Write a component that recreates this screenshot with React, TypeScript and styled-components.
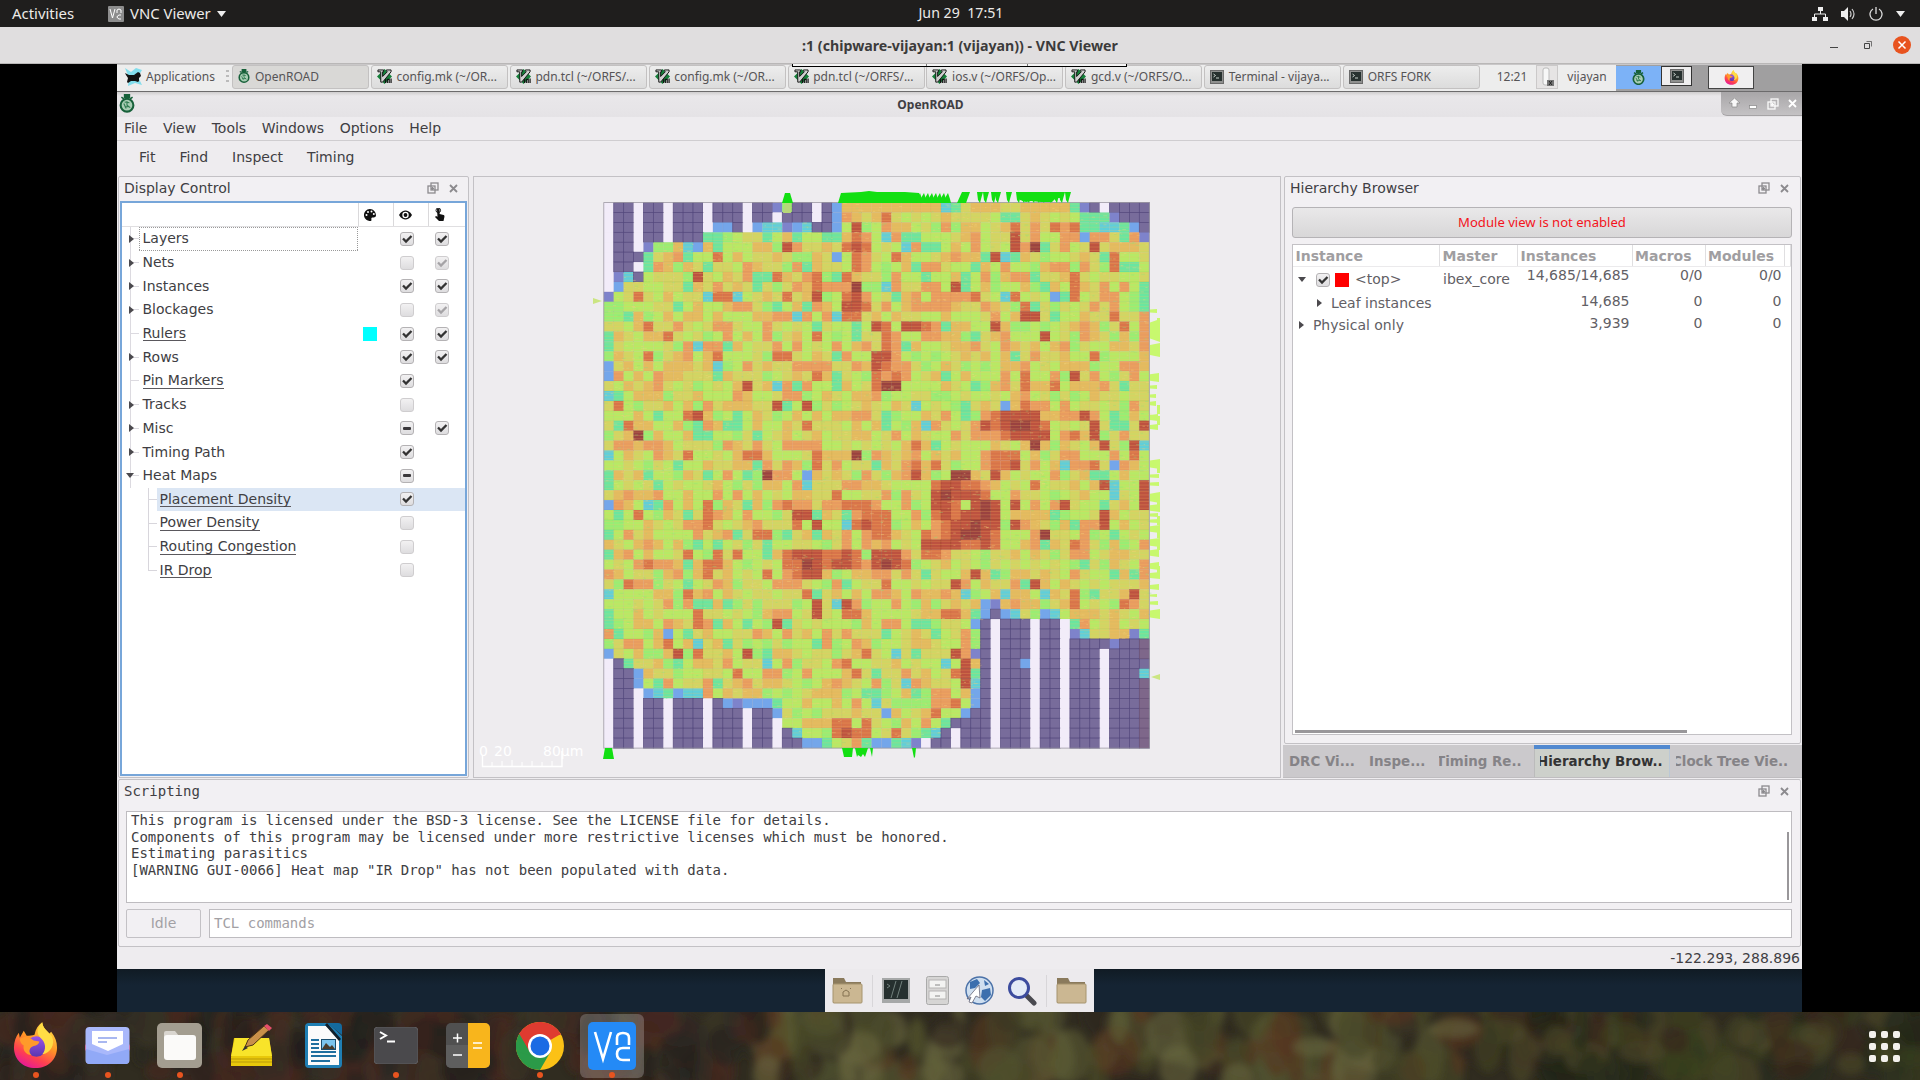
import React from "react";
import styled, { createGlobalStyle, css } from "styled-components";

const SANS = `"DejaVu Sans", "Noto Sans", sans-serif`;
const PANEL = `"Noto Sans", "DejaVu Sans", sans-serif`;
const MONO = `"DejaVu Sans Mono", "Liberation Mono", monospace`;

const Global = createGlobalStyle`
  * { box-sizing: border-box; }
  body { margin: 0; background: #000; overflow: hidden; }
`;

/* ---------- host desktop ---------- */

const Screen = styled.div`
  width: 1920px;
  height: 1080px;
  display: flex;
  flex-direction: column;
  font-family: ${SANS};
  font-size: 14px;
  color: #403e43;
  overflow: hidden;
  white-space: nowrap;
`;

const TopBar = styled.header`
  height: 27px;
  flex: none;
  background: #1f1e1d;
  color: #eceae8;
  display: grid;
  grid-template-columns: 1fr 1fr 1fr;
  align-items: center;
  padding: 0 8px 0 12px;
  font-family: ${PANEL};
  font-size: 14.2px;
`;
const TopLeft = styled.div`
  display: flex;
  align-items: center;
  font-size: 14.9px;
  line-height: 25px;
`;
const AppMenu = styled.div`
  display: flex;
  align-items: center;
  gap: 6px;
  margin-left: 34px;
`;
const TopCenter = styled.div`
  text-align: center;
  white-space: pre;
  line-height: 24px;
  margin-top: -1px;
  padding-right: 2px;
`;
const TopRight = styled.div`
  display: flex;
  justify-content: flex-end;
  align-items: center;
  gap: 13px;
  padding-right: 7px;
`;

const WindowBar = styled.div`
  height: 37px;
  flex: none;
  background: #e0dedf;
  border-bottom: 1px solid #b9b7b7;
  display: grid;
  grid-template-columns: 1fr auto 1fr;
  align-items: center;
  font: bold 14.2px ${PANEL};
  color: #3c3b3b;
  padding: 0 9px 0 0;
`;
const WindowTitle = styled.div`
  grid-column: 2;
  padding-left: 9px;
`;
const WindowButtons = styled.div`
  display: flex;
  justify-content: flex-end;
  align-items: center;
  gap: 26px;
  svg:last-child { margin-left: -5px; }
`;

const Viewer = styled.main`
  height: 948px;
  flex: none;
  background: #000;
  padding: 0 118px 0 117px;
  position: relative;
`;
const ToolbarHandle = styled.div`
  position: absolute;
  left: 792px;
  top: 0;
  width: 335px;
  height: 3px;
  background: linear-gradient(90deg, transparent 133px, #777 133px 134px, transparent 134px 234px, #777 234px 235px, transparent 235px), #f4f4f4;
  border: solid #000;
  border-width: 0 1px 1px;
`;
const Remote = styled.div`
  width: 1685px;
  height: 948px;
  background: linear-gradient(#101b24, #152433 16px) bottom / 100% 43px no-repeat;
  display: flex;
  flex-direction: column;
`;

/* ---------- remote task bar ---------- */

const TaskBar = styled.div`
  height: 27px;
  flex: none;
  background: #ededed;
  border-top: 1px solid #c9c7c8;
  display: flex;
  align-items: stretch;
  font-family: ${PANEL};
  font-size: 12px;
  line-height: 22px;
  color: #565456;
`;
const Applications = styled.div`
  width: 115px;
  display: flex;
  align-items: center;
  padding: 0 0 2px 7px;
  gap: 3px;
`;
const Grip = styled.i`
  width: 3px;
  height: 14px;
  margin-left: auto;
  margin-right: 3px;
  background: repeating-linear-gradient(#bbb 0 2px, transparent 2px 5px);
`;
const Task = styled.div<{ $active?: boolean }>`
  width: 137px;
  flex: none;
  margin: 0 1.9px 2px 0;
  padding: 0 5px 1px;
  display: flex;
  align-items: center;
  gap: ${(p) => (p.$active ? 5 : 4.6)}px;
  border: 1px solid #c3c1c1;
  border-radius: 3px;
  background: ${(p) => (p.$active ? "#d9d8d6" : "linear-gradient(#ededed,#dcdcdc)")};
`;
const Clock = styled.div`
  width: 54px;
  display: flex;
  align-items: center;
  justify-content: center;
  padding: 0 0 2px 6px;
`;
const Meter = styled.div`
  width: 22px;
  border: 1px solid #cbc9c9;
  background: #e6e4e4;
  margin-bottom: 2px;
  display: grid;
  place-items: center;
`;
const User = styled.div`
  width: 58px;
  padding-bottom: 2px;
  display: grid;
  place-items: center;
`;
const Pager = styled.div`
  flex: 1;
  background: #a09fa0;
  display: flex;
  align-items: flex-start;
`;
const Desk = styled.div<{ $w: number; $h: number; $bg: string; $line?: string; $m?: number }>`
  width: ${(p) => p.$w}px;
  height: ${(p) => p.$h}px;
  margin-right: ${(p) => p.$m ?? 0}px;
  margin-top: 1px;
  background: ${(p) => p.$bg};
  border: 1px solid ${(p) => p.$line ?? p.$bg};
  display: grid;
  place-items: center;
`;

/* ---------- OpenROAD window ---------- */

const AppWindow = styled.section`
  height: 878px;
  flex: none;
  display: flex;
  flex-direction: column;
  background: #eeecef;
  border-top: 1px solid #6c6b6c;
`;
const AppTitle = styled.div`
  height: 25px;
  flex: none;
  display: grid;
  grid-template-columns: 1fr auto 1fr;
  background: linear-gradient(#cfcdce, #e9e7ea 4px, #e5e3e6);
  font: bold 12px ${PANEL};
  line-height: 26px;
  padding-left: 2px;
  & > svg { margin-top: 2px; }
`;
const AppName = styled.span`
  padding-right: 60px;
`;
const AppButtons = styled.div`
  justify-self: end;
  width: 81px;
  height: 24px;
  border-radius: 0 0 0 6px;
  background: linear-gradient(#a8a6a8, #c4c2c4);
  border-bottom: 1px solid #a5a3a5;
  display: flex;
  align-items: center;
  justify-content: space-between;
  padding: 0 5px 0 8px;
`;
const MenuBar = styled.nav`
  height: 24px;
  flex: none;
  display: flex;
  gap: 15.5px;
  padding: 1px 0 0 7px;
  line-height: 20px;
  border-bottom: 1px solid #cfcdd0;
`;
const ToolBar = styled(MenuBar)`
  height: 35px;
  gap: 24px;
  padding: 6px 0 0 22px;
  border: 0;
`;
const Work = styled.div`
  height: 601px;
  flex: none;
  display: grid;
  grid-template-columns: 352px 810px 1fr;
  column-gap: 2px;
`;
const Dock = styled.section`
  border: 1px solid #c3c1c5;
  border-radius: 2px;
  background: #f2f0f3;
  display: flex;
  flex-direction: column;
  margin-left: 1px;
`;
const DockHead = styled.div<{ $right?: number }>`
  height: 24px;
  flex: none;
  display: flex;
  align-items: center;
  padding: 0 ${(p) => p.$right ?? 11}px 2px 5px;
  gap: 10px;
  svg:first-of-type { margin-left: auto; }
`;

const Tree = styled.div`
  flex: 1;
  margin: 0 1px 1px 1px;
  border: 2px solid #77a6d9;
  background: #fff;
`;
const TreeHead = styled.div`
  height: 24px;
  display: grid;
  grid-template-columns: 237px 35px 35px 1fr;
  border-bottom: 1px solid #e0dfe1;
`;
const HeadCell = styled.div`
  border-right: 1px solid #dad9db;
  padding: 0 0 0 5px;
  display: flex;
  align-items: center;
  &:last-child { border: 0; }
`;
const TreeRow = styled.div<{ $sel?: boolean }>`
  height: 23.7px;
  display: grid;
  grid-template-columns: 236px 38px 35px 1fr;
  align-items: center;
  ${(p) => p.$sel && css`background: linear-gradient(90deg, #fff 35px, #dbe6f4 35px);`}
`;
const NameCell = styled.div<{ $child?: boolean; $focus?: boolean }>`
  height: 100%;
  display: flex;
  align-items: center;
  padding-left: ${(p) => (p.$child ? 25.5 : 3.5)}px;
  ${(p) => p.$focus && css`background:
    repeating-linear-gradient(90deg,#999 0 1px,transparent 1px 2px) 17px 0 / 221px 1px no-repeat,
    repeating-linear-gradient(90deg,#999 0 1px,transparent 1px 2px) 17px 100% / 221px 1px no-repeat,
    repeating-linear-gradient(#999 0 1px,transparent 1px 2px) 17px 0 / 1px 100% no-repeat,
    repeating-linear-gradient(#999 0 1px,transparent 1px 2px) 235px 0 / 1px 100% no-repeat;`}
`;
const Label = styled.span<{ $u?: boolean }>`
  line-height: 17px;
  ${(p) => p.$u && css`border-bottom: 1px solid #5a585d; line-height: 14.5px;`}
`;
const Branch = styled.i<{ $end?: boolean }>`
  width: 9px;
  height: 100%;
  margin-right: 3px;
  background:
    linear-gradient(#d8d6dc, #d8d6dc) 0 0 / 1px ${(p) => (p.$end ? "50%" : "100%")} no-repeat,
    linear-gradient(#d8d6dc, #d8d6dc) 0 50% / 100% 1px no-repeat;
`;
const ArrowBox = styled.i`
  width: 17px;
  height: 100%;
  display: flex;
  align-items: center;
  background: linear-gradient(#dcdae0, #dcdae0) 4px 50% / 9px 1px no-repeat, linear-gradient(#dcdae0, #dcdae0) 4px 0 / 1px 100% no-repeat;
`;
const Arrow = styled.b<{ $open?: boolean }>`
  border: solid transparent;
  ${(p) => p.$open
    ? css`border-width: 5px 4.5px 0; border-top-color: #4b494d;`
    : css`border-width: 4.5px 0 4.5px 5px; border-left-color: #4b494d; margin-left: 3px;`}
`;
const Swatch = styled.i<{ $c: string }>`
  width: 14px;
  height: 14px;
  background: ${(p) => p.$c};
  margin-left: 5px;
`;
const Box = styled.i<{ $dim?: boolean; $left?: number }>`
  width: 14px;
  height: 14px;
  flex: none;
  border: 1px solid ${(p) => (p.$dim ? "#cfcdcf" : "#b4b2b4")};
  border-radius: 3px;
  background: linear-gradient(#f2f1f2, #dedddf);
  display: grid;
  place-items: center;
  margin-left: ${(p) => p.$left ?? 4}px;
`;

const Canvas = styled.div`
  border: 1px solid #c3c1c5;
  margin-left: 2px;
  background: #eeecef;
  overflow: hidden;
  svg { display: block; }
`;

const RightCol = styled.div`
  display: flex;
  flex-direction: column;
`;
const HierDock = styled(Dock)`
  height: 568px;
  flex: none;
  margin-right: 1px;
`;
const Banner = styled.div`
  height: 31px;
  margin: 6px 8px 0 7px;
  border: 1px solid #b5b3b6;
  border-radius: 3px;
  background: linear-gradient(#e9e8e9, #d8d7d8);
  color: #f3141c;
  font: 13.1px/29px ${PANEL};
  text-align: center;
`;
const Table = styled.div`
  flex: 1;
  margin: 6px 8px 8px 7px;
  border: 1px solid #c3c1c5;
  background: #fff;
  display: flex;
  flex-direction: column;
  color: #626065;
`;
const cols = `147px 78px 114.5px 73px 79px 1fr`;
const THead = styled.div`
  height: 22px;
  display: grid;
  grid-template-columns: ${cols};
  font-weight: bold;
  color: #a09ea1;
  border-bottom: 1px solid #ebeaec;
  overflow: hidden;
`;
const Th = styled.div`
  padding-left: 2.5px;
  line-height: 22px;
  border-right: 1px solid #e0dfe1;
  overflow: hidden;
`;
const TRow = styled.div<{ $h: number; $up: number }>`
  height: ${(p) => p.$h}px;
  display: grid;
  grid-template-columns: ${cols};
  line-height: ${(p) => p.$h}px;
  & > span { text-align: right; padding-right: 3px; margin-top: -${(p) => p.$up}px; }
  & > em { font-style: normal; padding-left: 3px; }
`;
const TName = styled.div<{ $pad: number }>`
  display: flex;
  align-items: center;
  padding-left: ${(p) => p.$pad}px;
`;
const TopName = styled.span`
  padding-left: 6px;
`;
const HScroll = styled.i`
  width: 392px;
  height: 3px;
  margin: auto 0 1px 2px;
  background: #99979a;
`;
const Tabs = styled.div`
  height: 33px;
  flex: none;
  margin-top: 1px;
  display: flex;
  background: #cbc9cc;
  font-weight: bold;
  font-size: 13.4px;
  color: #858387;
`;
const Tab = styled.div<{ $w: number; $on?: boolean; $cut?: number }>`
  width: ${(p) => p.$w}px;
  padding: 0 6px;
  line-height: 34px;
  border-bottom: 1px solid #bfbdc0;
  ${(p) => p.$on && css`background: #cdd0cb; color: #333; box-shadow: inset 0 4px #5289d0, inset 1px 0 #bbb, inset -1px 0 #bbc8d6;`}
  & > div { overflow: hidden; height: 32px; }
  & > div > span { margin-left: -${(p) => p.$cut ?? 0}px; }
`;

const Script = styled(Dock)`
  height: 168px;
  flex: none;
  margin: 2px 1px 0 1px;
  font-family: ${MONO};
`;
const Output = styled.div`
  height: 92px;
  margin: 7px 8px 0 7px;
  padding: 0 2px 0 4px;
  background: #fff;
  border: 1px solid #bebcc0;
  line-height: 16.65px;
  display: flex;
  justify-content: space-between;
`;
const VScroll = styled.i`
  width: 2px;
  height: 68px;
  align-self: flex-end;
  margin: 0 0 2px;
  background: #99979a;
`;
const CommandLine = styled.div`
  display: flex;
  gap: 8px;
  height: 29px;
  margin: 6px 8px 0 7px;
  color: #a2a0a4;
`;
const Idle = styled.div`
  width: 75px;
  border: 1px solid #c3c1c5;
  border-radius: 2px;
  text-align: center;
  line-height: 27px;
  font-family: ${SANS};
`;
const Command = styled.div`
  flex: 1;
  border: 1px solid #bebcc0;
  background: #fff;
  padding-left: 4px;
  line-height: 26px;
`;
const Status = styled.div`
  flex: 1;
  text-align: right;
  padding: 3px 2px 0 0;
  line-height: 17px;
`;

const Shelf = styled.div`
  width: 269px;
  height: 43px;
  margin-left: 708px;
  background: #eceaed;
  display: flex;
  align-items: center;
  padding: 0 0 0 7px;
`;
const ShelfItem = styled.div<{ $w: number; $line?: boolean }>`
  width: ${(p) => p.$w}px;
  height: 32px;
  display: flex;
  align-items: center;
  ${(p) => p.$line && css`border-right: 1px solid #d8d6d9;`}
`;

/* ---------- host launcher ---------- */

const Launcher = styled.footer`
  height: 68px;
  flex: none;
  position: relative;
  display: flex;
  background: #302c20;
`;
const Wallpaper = styled.svg`
  position: absolute;
  inset: 0;
`;
const Launch = styled.div<{ $on?: boolean }>`
  position: relative;
  width: 64px;
  height: 64px;
  margin: 2px 4px;
  border-radius: 6px;
  display: grid;
  place-items: center;
  padding: 0 1px 1px 0;
  background: ${(p) => (p.$on ? "rgba(255,255,255,.22)" : "none")};
`;
const Dot = styled.i`
  position: absolute;
  bottom: 0;
  left: 29px;
  width: 6px;
  height: 6px;
  border-radius: 50%;
  background: #e9541f;
`;
const AppsGrid = styled.div`
  position: relative;
  margin: 19px 20px 0 auto;
  width: 31px;
  height: 31px;
  display: grid;
  grid-template-columns: repeat(3, 7px);
  grid-auto-rows: 7px;
  gap: 5px;
  i { background: #f3f1ec; border-radius: 2px; }
`;

/* ---------- heat map data ---------- */

const MAP = [
  " pp pp ppp ppp ppqgpp pboooo" + "ooooooctYoooYYooooot" + "qp pppp",
  " pp pp ppp ppp pp ppp pbOoYo" + "rYyYyYoYYYYyttYoYyYytttqppp",
  " pp pp ppp bbp bccqbcppb.R.." + ".............r.O.rOrttcctbp",
  " pp pp ppptt....t..t..tt.rO." + "cOtt.....O...R......b...t.q",
  " pp qggocb.t......R.....rRr." + "..cOtt...O...RODt.O..R.ooo.",
  " pppt..Ot..r...........b.rO." + ".r.....O..tRct........tr...",
  " pp t.....t...O....Ot....rO." + "...t.O...t..O.....O....rtt.",
  " qcp.....R.....ttr...r.tr..." + ".O..t...t.O..OOt...r.......",
  " b......t......t.....rO.OD.." + "c....O.Rt.......t..r......t",
  "q..r......crrc....r..R..rRO." + ".t.O.O..Or..cr...btr..OO..t",
  "gg.....t......O..t..t...RRr." + "O..OOOO...O...rt..........t",
  "ggt..............OOcO..crr.." + "..............RR.t.....r..O",
  "....r..O....O........t...t.R" + "r.RRr.t....R........O...r.O",
  "t.....r.........O....r...t.." + "rO...O...t......R.........O",
  "t........c..t....O.O......O." + "rOt......O..O.....O.......O",
  "....r......r.....rr....t...R" + "RO...........t.O.....r.....",
  "b..........c.......OO....O.R" + "rOO...........O.........OO.",
  "bO...O.....t.........r.t...r" + "OrO...t.....O.r..O.R.O.....",
  ".....O........R..cOtO..t...r" + "DD.......t..O.r..r......t..",
  "ct.........................O" + "..............O............",
  ".r........O......Rt.R......." + "...c....t...b.rOO........O.",
  ".....t..rR...t...........OO." + "t.....O.t.OrRRRRo.OORO.t...",
  ".tr......tO.tt......r......." + "t...c....ORrRDDRr....R.tt.R",
  "...D.....tt....t............" + ".O.......OOOrRRRR..r.R.....",
  ".OO.OO......O.....OO.O......" + "...r.t.........D......R..Rc",
  "c.......r.....rr.....r...D.O" + "...O.......rrr....OO.....r.",
  ".......t.......t.....r.O...t" + "..Or.r....OrrR....c.Or.b...",
  "t...t.....t...t.DO..b......." + "..OR...DDo.R.........tt....",
  "t....t.............Oc...OO.." + ".....rRRrrO....r......Rc..R",
  "..O..O.....O...........r...." + ".....RDRRRr..O.........c..R",
  "b...ct....r...t..OrOO.OOrrrO" + "..O..RRryRDR.R...OR...t...R",
  ".t.r....t.rO..O....RRt..tOrr" + "r..O.rRrRRDR.....t....R....",
  "........OOr....O...ryR..crRr" + "r....OrRRDRR.RO....tOOR....",
  "t.O.........Ot.rr.t..t..O.Or" + "r...rOrRDDRr...OD......t...",
  "....O....t.t....t.......O.O." + "O...RRRRrrRr....t..rO.....O",
  "t.......r..r.r..t.rRRRrrRr.R" + "RRO.rrO............OO......",
  "....rO..t.rr......rrDRrRRrOR" + "DRr.................t......",
  ".......O..r.....r..rRR......" + "O.O.t....R.t...........t.t.",
  "..rOO...t........OO....Ot..." + "r......R......tR...........",
  "c.......r.O.........rt.....O" + "........c...c...c..r.t...R.",
  "......O.Ott.t........R.cRO.." + ".O........bq.O.....r....r..",
  "t........r.......OO..R..rr.." + "......rr.tbpbc.gbc.........",
  "t........r.t..t..Rt........." + "O..tt....bp ppp pp t.......",
  ".t....b.t...............O..." + "t....t...gp ppp pp qc....qt",
  "......r..c..t........t......" + "........Ogp ppp pp ppppqppp",
  "b......R.r....R.t.........r." + ".c.t...ROqp ppp pp ppp pppp",
  " pt....t....O...c.O....Or..." + "......c.R.p ppb pp ppp pppp",
  " ppb.........r..OO.......r.t" + ".......rRtp ppp pp ppp pppc",
  " ppb.tO....t..O............." + "..c.....Rcp ppp pp ppp pppp",
  " pp bctbccO...............tt" + "...t.OO..bp ppp pp ppp pppp",
  " pp pp ppp pbqbbbt.........c" + ".....O.r.bp ppp pp ppp pppp",
  " pp pp ppp ppp ppb.........." + "b....r..bpp ppp pp ppp pppp",
  " pp pp ppp ppp pp .....rr.r." + "......tpppp ppp pp ppp pppp",
  " pp pp ppp ppp pp pc...rRrr." + ".r..tcp ppp ppp pp ppp pppp",
  " pp pp ppp ppp pp ppbbt...tb" + "btcq pp ppp ppp pp ppp pppp",
];

const SHADES: Record<string, string> = {
  " ": "#f2ecf9", p: "#786c9b", q: "#7e83cb", b: "#74a6ea", c: "#5fcfda",
  t: "#6ae6a0", g: "#98ee74", y: "#b6ea66", Y: "#d0d664", o: "#e2bb60",
  O: "#e89c60", r: "#d8744a", R: "#bd5240", D: "#9a4240",
};

function random(seed: number) {
  let s = seed;
  return () => {
    s = (s * 1664525 + 1013904223) >>> 0;
    return s / 4294967296;
  };
}

const CELL = 9.917;
const LEFT = 603.8;
const TOP = 202.6;

function HeatMap() {
  const rnd = random(77);
  const mix = "ggyyyyyyYYYYYooooO";
  const rects: React.ReactNode[] = [];
  MAP.forEach((row, j) =>
    [...row].forEach((ch, i) => {
      const pick = mix[Math.floor(rnd() * mix.length)];
      const key = ch === "." ? pick : ch;
      rects.push(
        <rect key={`${i}-${j}`} x={LEFT + i * CELL} y={TOP + j * CELL} width={CELL + 0.1} height={CELL + 0.1}
          fill={SHADES[key]} stroke={key === "p" ? "#54487d" : "#7a3a20"}
          strokeOpacity={key === "p" ? 0.85 : key === " " ? 0 : "RD".includes(key) ? 0.3 : 0.05} strokeWidth={key === "p" ? 0.8 : 0.7} />
      );
    })
  );
  const specks: React.ReactNode[] = [];
  for (let k = 0; k < 4200; k++) {
    const x = rnd() * 545, y = rnd() * 545;
    const ch = MAP[Math.min(54, Math.floor(y / CELL))][Math.min(54, Math.floor(x / CELL))];
    if (" pqb".includes(ch)) continue;
    specks.push(<rect key={k} x={LEFT + x} y={TOP + y} width={1 + rnd() * 3} height={1} fill={k % 3 ? "#f4d67e" : "#8fe07c"} opacity={0.35} />);
  }
  const lines: React.ReactNode[] = [];
  MAP.forEach((row, j) => {
    let start = -1;
    for (let i = 0; i <= 55; i++) {
      const live = i < 55 && !" pqb".includes(row[i]);
      if (live && start < 0) start = i;
      if (!live && start >= 0) {
        for (let n = 0; n < 3; n++)
          lines.push(<rect key={`${j}-${i}-${n}`} x={LEFT + start * CELL} y={TOP + j * CELL + n * 3.3 + 1} width={(i - start) * CELL} height={0.9} fill="#ffc060" opacity={0.24} />);
        start = -1;
      }
    }
  });
  const topPins = [980, 986, 994, 998, 1009, 1019, 1024, 1029, 1034, 1039, 1044, 1051, 1057, 1062, 1068];
  const spikes = [919, 923, 927, 931, 935, 939, 943, 947];
  const side: [number, number, number][] = [
    [309, 313, 7], [319, 342, 10], [343, 357, 10], [373, 382, 9], [385, 389, 7], [394, 398, 6], [401, 406, 6], [414, 421, 8], [424, 430, 8],
    [459, 469, 10], [474, 478, 9], [482, 486, 9], [492, 503, 10], [504, 512, 10], [513, 517, 8], [519, 523, 9], [525, 533, 10], [538, 547, 10], [549, 557, 9],
    [562, 570, 9], [572, 579, 10], [584, 590, 9], [594, 597, 7], [601, 605, 8], [609, 619, 10],
  ];
  return (
    <svg width="808" height="601" viewBox="474 177 808 601">
      <g shapeRendering="auto">{rects}</g>
      <g>{lines}</g>
      <g>{specks}</g>
      <rect x="603.8" y="202.6" width="545.5" height="545.5" fill="none" stroke="#9d9aa3" strokeWidth="0.8" />
      <path d="M1139 639h10v20h-10zM1139 679h10v69h-10z" fill="#8a5f6a" opacity=".35" />
      <g fill="#12df12">
        <path d="M785 193h5l3 10h-11z" />
        <path d="M841 193l20-1 8-1 8 1h28l14 1v10h-81z" />
        {spikes.map((x) => <path key={x} d={`M${x - 3} 203l1-5 3-5 2 6 1 4z`} />)}
        <path d="M962 192h8l-4 11h-9z" />
        {topPins.map((x) => <path key={x} d={`M${x - 3} 192h6l-2 7-1 4-2-3z`} />)}
        <path d="M1018 192h45l-3 6h-4l-4 4h-11l-10-1-5 1-6-2z" />
        <path d="M605 748h7l2 11h-11z" />
        <path d="M842 748h11l-1 9h-8zM855 748h13l-3 9-2-3-2 3-3-2-1 2zM870 748h3l-1 9z" />
        <path d="M912 748h4l-1 9-1 1z" />
      </g>
      <path d="M785 203h5l1 10h-8z" fill="#b7d77a" />
      <g fill="#c8f86e">
        {side.map(([a, b, w]) => <path key={a} d={`M1150 ${(a + b) / 2 - (b - a) * 0.35}L${1150 + w} ${a}V${b}L1150 ${(a + b) / 2 + (b - a) * 0.35}z`} />)}
        {[318, 328, 345, 405, 416, 464, 502, 516, 529, 541, 566].map((y) => <rect key={y} x="1157" y={y} width="3" height="9" />)}
      </g>
      <path d="M593 298l9 3-9 3zM1160 674l-9 3 9 3z" fill="#cbe582" />
      <g fill="none" stroke="#fff" strokeWidth="1.4">
        <path d="M482.5 755v11.5h79.5V751" />
        <path d="M492 766v-4M502 766v-5M512 766v-6M522 766v-4M532 766v-5M542 766v-4M552 766v-5" strokeWidth="1" />
      </g>
      <g fill="#fff" fontFamily="DejaVu Sans, sans-serif" fontSize="14">
        <text x="479" y="756">0</text>
        <text x="494" y="756">20</text>
        <text x="543" y="756">80µm</text>
      </g>
    </svg>
  );
}

/* ---------- small icons ---------- */

const Stopwatch = ({ s = 16 }: { s?: number }) => (
  <svg width={s} height={s * 1.2} viewBox="0 0 20 24">
    <path d="M7 1h6v3H7zM3 4l3 2M17 4l-3 2" fill="#17613a" stroke="#17613a" strokeWidth="2" />
    <circle cx="10" cy="14" r="8" fill="#a9cdb4" stroke="#17613a" strokeWidth="2.6" />
    <path d="M10 9v5l4 3M6 12l3 6M7 16h6M7 10l6 1" stroke="#2f7a50" strokeWidth="1.4" fill="none" />
  </svg>
);
const Vim = () => (
  <svg width="15" height="15" viewBox="0 0 16 16">
    <path d="M8 0l8 8-8 8-8-8z" fill="#15803a" />
    <path d="M1 1h6v2L6 3v5l5-5-1-1V1h5v2L6 14H4V3H1z" fill="#cfcfcf" stroke="#111" strokeWidth="1" />
    <path d="M9 15v-4M11 15v-4h2v4M15 10v5" stroke="#111" strokeWidth="1.3" fill="none" />
  </svg>
);
const Term = ({ s = 14 }: { s?: number }) => (
  <svg width={s} height={s} viewBox="0 0 14 14">
    <rect x=".5" y=".5" width="13" height="13" fill="#8f908f" stroke="#6a6a6a" />
    <rect x="2" y="2" width="10" height="9" fill="#27312f" />
    <path d="M3.5 4l2 1.5-2 1.5M6 8h3" stroke="#c9d2cc" fill="none" />
  </svg>
);
const XfceMouse = () => (
  <svg width="19" height="19" viewBox="0 0 19 19">
    <path d="M1 0l6 4 5-4 6 2-4 7 4 8-7-2-7 3 1-8z" fill="#76dcec" opacity=".9" />
    <path d="M1 5l4 2 5 0 4-3 2 1 1 3-2 2v3l-1 1-3-1-4 0-3 2-1-1 1-4-2-3z" fill="#111" />
  </svg>
);
const Restore = ({ c = "#8c8a8e" }: { c?: string }) => (
  <svg width="12" height="12" viewBox="0 0 12 12" fill="none" stroke={c} strokeWidth="1.3">
    <rect x="4" y="1" width="7" height="7" /><rect x="1" y="4" width="7" height="7" /><path d="M4 6.5h3M5.5 5v3" />
  </svg>
);
const Cross = ({ c = "#8c8a8e", s = 9 }: { c?: string; s?: number }) => (
  <svg width={s} height={s} viewBox="0 0 9 9" stroke={c} strokeWidth="1.8"><path d="M1 1l7 7M8 1L1 8" /></svg>
);
const Tick = ({ c = "#333" }: { c?: string }) => (
  <svg width="12" height="12" viewBox="0 0 12 12" fill="none" stroke={c} strokeWidth="2.3"><path d="M2 5.5l3 3L10.5 3" /></svg>
);
const Firefox = ({ s }: { s: number }) => (
  <svg width={s} height={s} viewBox="0 0 48 48">
    <defs>
      <linearGradient id="fx" x1="0.8" y1="0" x2="0.3" y2="1"><stop offset="0" stopColor="#ffe64a" /><stop offset=".45" stopColor="#ff9526" /><stop offset=".75" stopColor="#ff4050" /><stop offset="1" stopColor="#e5189a" /></linearGradient>
      <linearGradient id="fp" x1="0" y1="0" x2="0" y2="1"><stop offset="0" stopColor="#9a55e8" /><stop offset="1" stopColor="#5a36b0" /></linearGradient>
    </defs>
    <path d="M24 47C11 47 2 38 2 26c0-6 2-11 5-15l1 5 4-7 3 5c3 0 6 0 8-1 1-6 4-10 8-13 0 6 4 8 7 12l2-2c4 5 6 10 6 16 0 12-9 21-22 21z" fill="url(#fx)" />
    <circle cx="25" cy="25" r="10.5" fill="url(#fp)" />
    <path d="M8 17c5-3 10-2 14 2l6 1c-1 4-4 4-7 5-4 2-4 6-1 9-7-1-9-6-8-10-2-1-4-4-4-7z" fill="#ff9a2a" />
    <path d="M31 1c-6 5-6 11-2 15 6 5 6 12 2 17 9-2 13-10 10-18-3-5-9-7-10-14z" fill="#ffdd45" />
  </svg>
);

type Row = { n: string; child?: boolean; leaf?: boolean; open?: boolean; a?: string; b?: string; sw?: string; sel?: boolean; focus?: boolean; end?: boolean };
const rows: Row[] = [
  { n: "Layers", a: "x", b: "x", focus: true },
  { n: "Nets", a: "o", b: "d" },
  { n: "Instances", a: "x", b: "x" },
  { n: "Blockages", a: "o", b: "d" },
  { n: "Rulers", leaf: true, a: "x", b: "x", sw: "#00ffff" },
  { n: "Rows", a: "x", b: "x" },
  { n: "Pin Markers", leaf: true, a: "x" },
  { n: "Tracks", a: "o" },
  { n: "Misc", a: "-", b: "x" },
  { n: "Timing Path", a: "x" },
  { n: "Heat Maps", open: true, a: "-" },
  { n: "Placement Density", child: true, a: "x", sel: true },
  { n: "Power Density", child: true, a: "o" },
  { n: "Routing Congestion", child: true, a: "o" },
  { n: "IR Drop", child: true, a: "o", end: true },
];

function Check({ v }: { v?: string }) {
  if (!v) return <span />;
  return (
    <Box $dim={v === "d" || v === "o"}>
      {v === "x" && <Tick />}
      {v === "d" && <Tick c="#a5a3a6" />}
      {v === "-" && <svg width="8" height="3"><rect width="8" height="3" rx="1" fill="#3a383b" /></svg>}
    </Box>
  );
}

function DisplayControl() {
  return (
    <Dock>
      <DockHead $right={10}>Display Control<Restore /><Cross /></DockHead>
      <Tree>
        <TreeHead>
          <HeadCell />
          <HeadCell><svg width="12" height="12" viewBox="0 0 12 12"><path d="M6 0a6 6 0 1 0 1 11.900c1-.5 0-1.900.5-2.900s4 .5 4.500-2.500C12 3 9.500 0 6 0z" fill="#111" /><g fill="#fff"><circle cx="2.500" cy="6" r="1" /><circle cx="4" cy="3" r="1" /><circle cx="7.500" cy="2.500" r="1" /><circle cx="9.800" cy="5" r="1" /></g></svg></HeadCell>
          <HeadCell><svg width="13" height="10" viewBox="0 0 13 10"><path d="M0 5C2 1.500 4.500.5 6.500.5S11 1.500 13 5c-2 3.500-4.500 4.500-6.500 4.500S2 8.500 0 5z" fill="#111" /><circle cx="6.500" cy="5" r="3.200" fill="#fff" /><circle cx="6.500" cy="5" r="1.900" fill="#111" /></svg></HeadCell>
          <HeadCell><svg width="11" height="13" viewBox="0 0 11 13"><path d="M3 1.500a1.300 1.300 0 0 1 2.600 0V6l4 1c.8.3 1 1 .8 2L9.500 13H5L1 9l1-1 1.500.8z" fill="#111" /><circle cx="4.300" cy="2.300" r="2.300" fill="none" stroke="#111" strokeWidth=".9" /></svg></HeadCell>
        </TreeHead>
        {rows.map((r) => (
          <TreeRow key={r.n} $sel={r.sel}>
            <NameCell $child={r.child} $focus={r.focus}>
              {r.child ? <Branch $end={r.end} /> : (
                <ArrowBox>{!r.leaf && <Arrow $open={r.open} />}</ArrowBox>
              )}
              <Label $u={r.child || r.leaf}>{r.n}</Label>
            </NameCell>
            {r.sw ? <Swatch $c={r.sw} /> : <span />}
            <Check v={r.a} />
            <Check v={r.b} />
          </TreeRow>
        ))}
      </Tree>
    </Dock>
  );
}

function Hierarchy() {
  return (
    <RightCol>
      <HierDock>
        <DockHead>Hierarchy Browser<Restore /><Cross /></DockHead>
        <Banner>Module view is not enabled</Banner>
        <Table>
          <THead>{["Instance", "Master", "Instances", "Macros", "Modules", ""].map((h, i) => <Th key={i}>{h}</Th>)}</THead>
          <TRow $h={25} $up={4}>
            <TName $pad={5}><Arrow $open /><Box $left={10}><Tick /></Box><Swatch $c="#ff0000" /><TopName>&lt;top&gt;</TopName></TName>
            <em>ibex_core</em><span>14,685/14,685</span><span>0/0</span><span>0/0</span>
          </TRow>
          <TRow $h={22} $up={2}>
            <TName $pad={21}><Arrow />&nbsp;&nbsp;Leaf instances</TName><em /><span>14,685</span><span>0</span><span>0</span>
          </TRow>
          <TRow $h={22} $up={2}>
            <TName $pad={3}><Arrow />&nbsp;&nbsp;Physical only</TName><em /><span>3,939</span><span>0</span><span>0</span>
          </TRow>
          <HScroll />
        </Table>
      </HierDock>
      <Tabs>
        <Tab $w={80}><div>DRC Vi...</div></Tab>
        <Tab $w={70}><div>Inspe...</div></Tab>
        <Tab $w={101} $cut={3}><div><span>Timing Re..</span></div></Tab>
        <Tab $w={136} $on $cut={3}><div><span>Hierarchy Brow..</span></div></Tab>
        <Tab $w={132} $cut={4}><div><span>Clock Tree Vie..</span></div></Tab>
      </Tabs>
    </RightCol>
  );
}

function Leaves() {
  const rnd = random(9);
  const left = ["#43271f", "#272320", "#352f24", "#4a2a1f", "#201e1b", "#3a3528"];
  const mid = ["#5b5b34", "#454526", "#56351f", "#525430", "#2e241e", "#66643e", "#4a4a26"];
  const right = ["#363d1e", "#1f2318", "#414421", "#38261a", "#272b1a", "#4c482a"];
  const out: React.ReactNode[] = [];
  for (let i = 0; i < 460; i++) {
    const x = rnd() * 1920;
    const set = x < 760 ? left : x < 1480 ? mid : right;
    out.push(<ellipse key={i} cx={x} cy={rnd() * 76 - 4} rx={7 + rnd() * 18} ry={9 + rnd() * 22} fill={set[Math.floor(rnd() * set.length)]} opacity={0.6} />);
  }
  return (
    <Wallpaper width="1920" height="68" viewBox="0 0 1920 68">
      <defs><filter id="soft"><feGaussianBlur stdDeviation="3.5" /></filter></defs>
      <g filter="url(#soft)">{out}</g>
    </Wallpaper>
  );
}

const apps: { on?: boolean; run?: boolean; icon: React.ReactNode }[] = [
  { run: true, icon: <Firefox s={47} /> },
  { run: true, icon: <svg width="45" height="37" viewBox="0 0 45 37"><rect x="0" y="17" width="45" height="7" rx="2" fill="#e2334e" /><rect x=".5" width="44" height="37" rx="4" fill="#a9b8fb" /><path d="M1 22l21 6 22-6v11a4 4 0 0 1-4 4H5a4 4 0 0 1-4-4z" fill="#91a9f7" /><path d="M7 4h31v13l-15 7-16-7z" fill="#fff" /><path d="M13 11h19M13 15h9" stroke="#a9b8f0" strokeWidth="2" /></svg> },
  { run: true, icon: <svg width="45" height="45" viewBox="0 0 45 45"><rect width="45" height="45" rx="5" fill="#a39d90" /><path d="M7 10q0-2 2-2h9l4 5v8H7z" fill="#d9d5cf" /><rect x="7" y="12" width="32" height="25" rx="3" fill="#fbfaf9" /></svg> },
  { icon: <svg width="44" height="44" viewBox="0 0 44 44"><path d="M4 14h35l3 19v9H1v-9z" fill="#e8c80a" /><path d="M5 14h34l3 18H1z" fill="#f8e42a" /><path d="M1 35h41M1 38h41" stroke="#b99a0a" /><path d="M15 23l3-7L34 2l5 4-16 15z" fill="#c9904a" stroke="#4d3413" /><path d="M34 2l3-2 5 4-3 3z" fill="#e4506a" /><path d="M12 27l3-5 3 2z" fill="#333" /></svg> },
  { icon: <svg width="37" height="45" viewBox="0 0 37 45"><path d="M4 0h19l14 13v28a4 4 0 0 1-4 4H4a4 4 0 0 1-4-4V4a4 4 0 0 1 4-4z" fill="#1f7fb4" /><path d="M3 3h18l13 13v26H3z" fill="#fbfbfb" /><path d="M22 0h11q4 0 4 4v8z" fill="#146a9e" /><path d="M22 0l14 16-2 2L20 2z" fill="#12202b" /><path d="M6 17h8M6 21h8M6 25h8M6 29h25M6 33h25M6 38h19" stroke="#1f6f9f" strokeWidth="1.8" /><rect x="16.5" y="16.5" width="14" height="10" fill="#7cc5ee" stroke="#1a4d6d" /><path d="M17 26l4-6 4 4 2-2 3 4z" fill="#4a3c2c" /></svg> },
  { run: true, icon: <svg width="44" height="37" viewBox="0 0 44 37"><rect width="44" height="37" rx="4" fill="#4a494c" stroke="#5d5c5f" /><path d="M6 5l6 3.5L6 12M13 14.5h8" stroke="#fff" strokeWidth="2" fill="none" /></svg> },
  { icon: <svg width="44" height="45" viewBox="0 0 44 45"><rect width="44" height="45" rx="5" fill="#505050" /><path d="M0 22h22v23H5a5 5 0 0 1-5-5z" fill="#5e5e5e" /><path d="M22 0h17a5 5 0 0 1 5 5v35a5 5 0 0 1-5 5H22z" fill="#f8b51c" /><path d="M7 15h9M11.5 10.5v9M7 32h9M27 20h9M27 25h9" stroke="#fff" strokeWidth="1.5" /></svg> },
  { run: true, icon: <svg width="48" height="48" viewBox="0 0 48 48"><circle cx="24" cy="24" r="24" fill="#fbc116" /><path d="M24 24L3.2 12A24 24 0 0 1 44.8 12z" fill="#df3b30" /><path d="M3.2 12A24 24 0 0 0 24 48l10.400-18L24 24z" fill="#2b9a48" /><path d="M3.2 12L13.6 30 24 13h20.800A24 24 0 0 0 3.200 12z" fill="#df3b30" /><path d="M3.200 12L13.600 30l3 4L3 30z" fill="#2b9a48" /><circle cx="24" cy="24" r="12" fill="#fff" /><circle cx="24" cy="24" r="9.500" fill="#1b6be4" /></svg> },
  { on: true, run: true, icon: <svg width="48" height="48" viewBox="0 0 48 48"><rect width="48" height="48" rx="5" fill="#248af6" /><path d="M7 10l8 27 8-27" stroke="#fff" strokeWidth="2.600" fill="none" /><path d="M29 23v-7q0-5 6-5t6 5v7M42 26h-7q-6 0-6 6t6 6h7" stroke="#fff" strokeWidth="2.600" fill="none" /></svg> },
];

const Folder = ({ home }: { home?: boolean }) => (
  <svg width="31" height="29" viewBox="0 0 31 29"><path d="M1 2h11l2 4h15v21H1z" fill="#8a7a5c" /><rect x="1" y="8" width="29" height="19" rx="1" fill="#cbb792" stroke="#a6946f" />{home && <path d="M11 20v-4l3-2 3 2v4zM9 12l1 1M18 12l1 1" stroke="#857353" fill="none" />}</svg>
);

const tasks: [string, string][] = [
  ["o", "OpenROAD"], ["v", "config.mk (~/OR..."], ["v", "pdn.tcl (~/ORFS/..."], ["v", "config.mk (~/OR..."], ["v", "pdn.tcl (~/ORFS/..."],
  ["v", "ios.v (~/ORFS/Op..."], ["v", "gcd.v (~/ORFS/O..."], ["t", "Terminal - vijaya..."], ["t", "ORFS FORK"],
];

export default function App() {
  return (
    <Screen>
      <Global />
      <TopBar>
        <TopLeft>
          Activities
          <AppMenu>
            <svg width="16" height="16" viewBox="0 0 16 16"><rect width="16" height="16" rx="1" fill="#8d8d8d" /><path d="M2 3l2.500 9L7 3M9 7V4q2-2 4 0v3M13 9h-2q-2 1-2 2t2 2h2" stroke="#fff" fill="none" /></svg>
            VNC Viewer
            <svg width="9" height="6"><path d="M0 0h9L4.500 6z" fill="#eee" /></svg>
          </AppMenu>
        </TopLeft>
        <TopCenter>Jun 29  17:51</TopCenter>
        <TopRight>
          <svg width="16" height="14" viewBox="0 0 16 14"><path d="M6 0h5v4H6zM0 10h5v4H0zM11 10h5v4h-5z" fill="#eee" /><path d="M8.500 4v3M2.500 10V7h11v3" stroke="#eee" fill="none" /></svg>
          <svg width="15" height="14" viewBox="0 0 15 14"><path d="M0 4h3l4-4v14l-4-4H0z" fill="#eee" /><path d="M9 4q2 3 0 6M11 2q4 5 0 10" stroke="#ccc" fill="none" strokeWidth="1.200" /></svg>
          <svg width="14" height="14" viewBox="0 0 14 14" stroke="#ddd" strokeWidth="1.300" fill="none"><path d="M7 0v7M4 2a6 6 0 1 0 6 0" /></svg>
          <svg width="9" height="6"><path d="M0 0h9L4.500 6z" fill="#eee" /></svg>
        </TopRight>
      </TopBar>
      <WindowBar>
        <WindowTitle>:1 (chipware-vijayan:1 (vijayan)) - VNC Viewer</WindowTitle>
        <WindowButtons>
          <svg width="8" height="8"><path d="M0 6.500h8" stroke="#444" /></svg>
          <svg width="8" height="8" viewBox="0 0 8 8" fill="none" stroke="#444"><path d="M.5 2.500h5v5h-5z" strokeWidth="1" /><path d="M2.500.5h5v5" strokeWidth=".7" /></svg>
          <svg width="18" height="18" viewBox="0 0 18 18"><circle cx="9" cy="9" r="9" fill="#e8531f" /><path d="M5.500 5.500l7 7M12.500 5.500l-7 7" stroke="#fff" strokeWidth="1.500" /></svg>
        </WindowButtons>
      </WindowBar>
      <Viewer>
        <Remote>
          <TaskBar>
            <Applications><XfceMouse />Applications<Grip /></Applications>
            {tasks.map(([k, t], i) => (
              <Task key={i} $active={i === 0}>{k === "o" ? <Stopwatch s={12} /> : k === "v" ? <Vim /> : <Term />}{t}</Task>
            ))}
            <Clock>12:21</Clock>
            <Meter><svg width="14" height="20" viewBox="0 0 14 20"><rect x="3" y="1" width="6" height="17" rx="2" fill="#f7f7f7" stroke="#bbb" /><rect x="7" y="13" width="7" height="6" fill="#777" /><path d="M9 14l3 4M12 14l-3 4" stroke="#222" /></svg></Meter>
            <User>vijayan</User>
            <Pager>
              <Desk $w={45} $h={23} $bg="#7cb2f7"><Stopwatch s={13} /></Desk>
              <Desk $w={31} $h={20} $bg="#efeeef" $line="#333" $m={16}><Term /></Desk>
              <Desk $w={46} $h={23} $bg="#f0eff0" $line="#444"><Firefox s={15} /></Desk>
            </Pager>
          </TaskBar>
          <AppWindow>
            <AppTitle>
              <Stopwatch s={16} />
              <AppName>OpenROAD</AppName>
              <AppButtons>
                <svg width="11" height="11" viewBox="0 0 11 11"><path d="M5.500 0L11 5H8v4H3V5H0z" fill="#f8f8f8" stroke="#888" strokeWidth=".7" /></svg>
                <svg width="8" height="11"><rect x=".5" y="7.500" width="7" height="3" fill="#fff" stroke="#888" strokeWidth=".7" /></svg>
                <Restore c="#fafafa" />
                <Cross c="#fff" />
              </AppButtons>
            </AppTitle>
            <MenuBar>{["File", "View", "Tools", "Windows", "Options", "Help"].map((m) => <span key={m}>{m}</span>)}</MenuBar>
            <ToolBar>{["Fit", "Find", "Inspect", "Timing"].map((m) => <span key={m}>{m}</span>)}</ToolBar>
            <Work>
              <DisplayControl />
              <Canvas><HeatMap /></Canvas>
              <Hierarchy />
            </Work>
            <Script>
              <DockHead>Scripting<Restore /><Cross /></DockHead>
              <Output>
                <div>
                  <div>This program is licensed under the BSD-3 license. See the LICENSE file for details.</div>
                  <div>Components of this program may be licensed under more restrictive licenses which must be honored.</div>
                  <div>Estimating parasitics</div>
                  <div>[WARNING GUI-0066] Heat map "IR Drop" has not been populated with data.</div>
                </div>
                <VScroll />
              </Output>
              <CommandLine><Idle>Idle</Idle><Command>TCL commands</Command></CommandLine>
            </Script>
            <Status>-122.293, 288.896</Status>
          </AppWindow>
          <Shelf>
            <ShelfItem $w={41} $line><Folder home /></ShelfItem>
            <ShelfItem $w={9} />
            <ShelfItem $w={44}><svg width="28" height="25" viewBox="0 0 28 25"><rect width="28" height="25" fill="#a6a8a8" /><rect x="2" y="2" width="24" height="19" fill="#26302f" /><path d="M5 6l3 2-3 2M14 3l-5 17M20 3l-5 17" stroke="#71807c" fill="none" /></svg></ShelfItem>
            <ShelfItem $w={39}><svg width="23" height="29" viewBox="0 0 23 29"><rect x=".5" y=".5" width="22" height="28" rx="2" fill="#d6d5d4" stroke="#aaa" /><rect x="3" y="4" width="17" height="8" fill="#f3f3f2" stroke="#b5b4b3" /><rect x="3" y="15" width="17" height="8" fill="#f3f3f2" stroke="#b5b4b3" /><path d="M9 9h5M9 20h5" stroke="#888" /></svg></ShelfItem>
            <ShelfItem $w={42}><svg width="29" height="29" viewBox="0 0 29 29"><circle cx="14.500" cy="14.500" r="13.500" fill="#cfdff0" stroke="#4b72a8" strokeWidth="1.500" /><path d="M5 6l7-3 3 4-5 5-5 1zM17 14l8-2 1 7-6 6-4-4zM19 4l5 4-4 2z" fill="#3c6fae" /><path d="M2 23L14 9l1 13-4-2-4 7-3-1 2-5z" fill="#fff" stroke="#667" strokeWidth=".8" /></svg></ShelfItem>
            <ShelfItem $w={40} $line><svg width="30" height="30" viewBox="0 0 30 30"><path d="M19 19l8 8" stroke="#4a4a50" strokeWidth="5" strokeLinecap="round" /><circle cx="12" cy="12" r="9.500" fill="#e3ebf7" stroke="#3c4c9e" strokeWidth="3" /></svg></ShelfItem>
            <ShelfItem $w={9} />
            <ShelfItem $w={36}><Folder /></ShelfItem>
          </Shelf>
        </Remote>
        <ToolbarHandle />
      </Viewer>
      <Launcher>
        <Leaves />
        {apps.map((a, i) => <Launch key={i} $on={a.on}>{a.icon}{a.run && <Dot />}</Launch>)}
        <AppsGrid>{Array.from({ length: 9 }, (_, i) => <i key={i} />)}</AppsGrid>
      </Launcher>
    </Screen>
  );
}
